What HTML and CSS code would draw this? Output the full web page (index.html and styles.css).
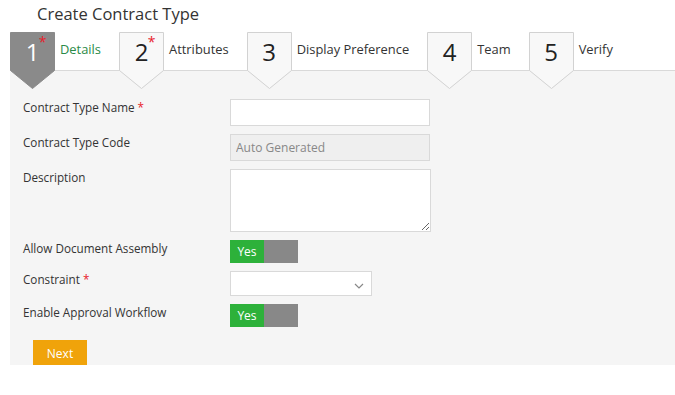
FILE: index.html
```html
<!DOCTYPE html>
<html lang="en">
<head>
    <meta charset="UTF-8">
    <title>Create Contract Type</title>
    <link rel="stylesheet" href="styles.css">
</head>
<body>
    <h1 class="page-title">Create Contract Type</h1>

    <div class="wizard">
        <div class="steps">
            <div class="step active">
                <div class="step-box">
                    <svg class="step-shape" width="45" height="57" viewBox="0 0 45 57"><polygon points="0.5,0.5 44.5,0.5 44.5,38.5 22.5,56.5 0.5,38.5"/></svg>
                    <span class="step-num">1<span class="req">*</span></span>
                </div>
                <span class="step-label">Details</span>
            </div>
            <div class="step">
                <div class="step-box">
                    <svg class="step-shape" width="45" height="57" viewBox="0 0 45 57"><polygon points="0.5,0.5 44.5,0.5 44.5,38.5 22.5,56.5 0.5,38.5"/></svg>
                    <span class="step-num">2<span class="req">*</span></span>
                </div>
                <span class="step-label">Attributes</span>
            </div>
            <div class="step">
                <div class="step-box">
                    <svg class="step-shape" width="45" height="57" viewBox="0 0 45 57"><polygon points="0.5,0.5 44.5,0.5 44.5,38.5 22.5,56.5 0.5,38.5"/></svg>
                    <span class="step-num">3</span>
                </div>
                <span class="step-label">Display Preference</span>
            </div>
            <div class="step">
                <div class="step-box">
                    <svg class="step-shape" width="45" height="57" viewBox="0 0 45 57"><polygon points="0.5,0.5 44.5,0.5 44.5,38.5 22.5,56.5 0.5,38.5"/></svg>
                    <span class="step-num">4</span>
                </div>
                <span class="step-label">Team</span>
            </div>
            <div class="step">
                <div class="step-box">
                    <svg class="step-shape" width="45" height="57" viewBox="0 0 45 57"><polygon points="0.5,0.5 44.5,0.5 44.5,38.5 22.5,56.5 0.5,38.5"/></svg>
                    <span class="step-num">5</span>
                </div>
                <span class="step-label">Verify</span>
            </div>
        </div>

        <div class="panel">
            <div class="form-grid">
                <label class="field-label">Contract Type Name <span class="req">*</span></label>
                <input class="text-input" type="text">

                <label class="field-label">Contract Type Code</label>
                <input class="text-input disabled" type="text" value="Auto Generated" disabled>

                <label class="field-label">Description</label>
                <textarea class="text-area"></textarea>

                <label class="field-label">Allow Document Assembly</label>
                <div class="toggle"><span class="toggle-on">Yes</span><span class="toggle-off"></span></div>

                <label class="field-label">Constraint <span class="req">*</span></label>
                <div class="select-box">
                    <svg class="chevron" width="10" height="6" viewBox="0 0 10 6"><polyline points="1,1 5,5 9,1"/></svg>
                </div>

                <label class="field-label">Enable Approval Workflow</label>
                <div class="toggle"><span class="toggle-on">Yes</span><span class="toggle-off"></span></div>
            </div>

            <button class="btn-next">Next</button>
        </div>
    </div>
</body>
</html>
```

FILE: styles.css
```css
:root {
    --text: #333333;
    --panel: #f5f5f5;
    --border: #d9d9d9;
    --green: #2db13a;
    --toggle-off: #888888;
    --orange: #f0a30a;
    --required: #e8202a;
}

body {
    margin: 0;
    font-family: 'Segoe UI', 'Open Sans', sans-serif;
    color: var(--text);
    background: #ffffff;
}

.page-title {
    margin: 0;
    padding: 3px 0 0 37px;
    height: 29px;
    font-size: 16.5px;
    font-weight: normal;
    line-height: 22px;
}

.wizard {
    margin-left: 10px;
}

.steps {
    display: flex;
    gap: 18px;
    height: 38px;
    border-bottom: 1px solid var(--border);
    position: relative;
    z-index: 1;
}

.step {
    display: flex;
    gap: 5px;
}

.step-box {
    position: relative;
    width: 45px;
    height: 38px;
    text-align: center;
}

.step-shape {
    position: absolute;
    left: 0;
    top: 0;
}

.step-shape polygon {
    fill: #f8f8f8;
    stroke: #d2d2d2;
    stroke-width: 1;
}

.step.active .step-shape polygon {
    fill: #8a8a8a;
    stroke: #8a8a8a;
}

.step-num {
    position: relative;
    display: inline-block;
    font-size: 24px;
    line-height: 40px;
    color: #222222;
}

.step.active .step-num {
    color: #ffffff;
}

.step-num .req {
    position: absolute;
    top: -10px;
    right: -7px;
    font-size: 14px;
}

.req {
    color: var(--required);
}

.step-label {
    font-size: 12.9px;
    line-height: 18px;
    padding-top: 8px;
    color: #333333;
}

.step.active .step-label {
    color: #2a8a47;
}

.panel {
    background: var(--panel);
    padding: 28px 0 0 13px;
    height: 266px;
}

.form-grid {
    display: grid;
    grid-template-columns: 207px auto;
    justify-content: start;
    row-gap: 8px;
}

.field-label {
    font-size: 11.7px;
    line-height: 17px;
}

.text-input {
    box-sizing: border-box;
    width: 200px;
    height: 27px;
    border: 1px solid var(--border);
    background: #ffffff;
    padding: 0 5px;
    font-family: inherit;
    font-size: 12px;
    color: #888888;
}

.text-input.disabled {
    background: #efefef;
}

.text-area {
    box-sizing: border-box;
    width: 201px;
    height: 63px;
    border: 1px solid var(--border);
    background: #ffffff;
    margin: 0;
    display: block;
}

.toggle {
    display: flex;
    width: 68px;
    height: 23px;
}

.toggle-on {
    width: 34px;
    background: var(--green);
    color: #ffffff;
    font-size: 12px;
    line-height: 23px;
    text-align: center;
}

.toggle-off {
    flex: 1;
    background: var(--toggle-off);
}

.select-box {
    box-sizing: border-box;
    width: 142px;
    height: 25px;
    border: 1px solid var(--border);
    background: #ffffff;
    display: flex;
    align-items: center;
    justify-content: flex-end;
    padding: 4px 7px 0 0;
}

.chevron polyline {
    fill: none;
    stroke: #888888;
    stroke-width: 1.2;
}

.btn-next {
    margin: 13px 0 0 10px;
    width: 54px;
    height: 26px;
    border: none;
    background: var(--orange);
    color: #ffffff;
    font-family: inherit;
    font-size: 12px;
    padding: 0;
}
```
